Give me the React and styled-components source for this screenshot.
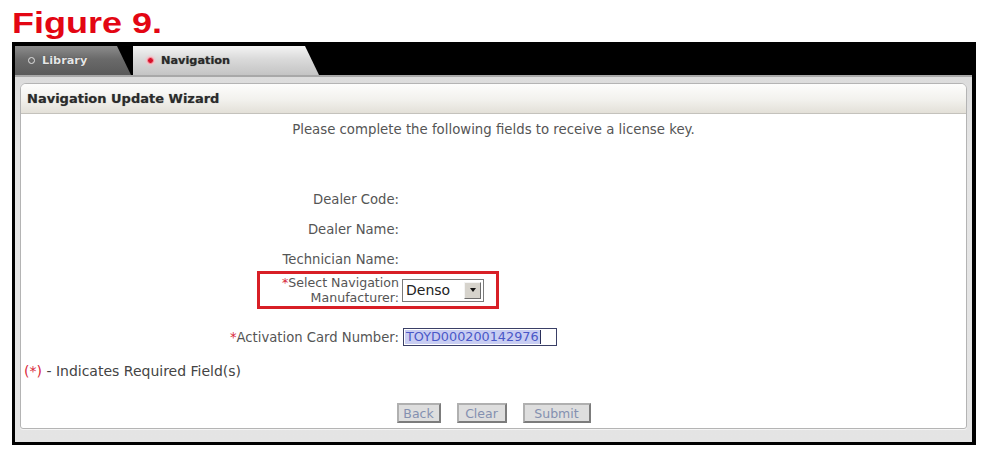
import styled, { createGlobalStyle } from 'styled-components'

const GlobalStyle = createGlobalStyle`
  html, body {
    margin: 0;
    padding: 0;
    background: #fff;
  }
  body {
    font-family: "DejaVu Sans", Verdana, sans-serif;
  }
`

const Page = styled.div`
  width: 983px;
  height: 453px;
  overflow: hidden;
`

const Title = styled.h1`
  margin: 0 0 4px 12px;
  padding-top: 8px;
  height: 30px;
  font-family: "Liberation Sans", Arial, sans-serif;
  font-weight: 700;
  font-size: 30px;
  line-height: 30px;
  color: #e30613;
  transform: scaleX(1.2);
  transform-origin: left center;
`

const Frame = styled.div`
  margin-left: 12px;
  width: 964px;
  box-sizing: border-box;
  border: 3px solid #000;
  border-right-width: 4px;
  background: #d6d6d6;
`

const TabBar = styled.div`
  height: 30px;
  background: #000;
  display: flex;
  align-items: flex-end;
  border-bottom: 2px solid #a8a8a8;
`

const Tab = styled.div`
  height: 29px;
  width: ${p => p.$width}px;
  margin-left: ${p => p.$offset || 0}px;
  box-sizing: border-box;
  display: flex;
  align-items: center;
  gap: 7px;
  padding-left: ${p => p.$pad}px;
  font-size: 11.3px;
  font-weight: 700;
  clip-path: polygon(0 0, calc(100% - 14px) 0, 100% 100%, 0 100%);
  color: ${p => (p.$active ? '#2a2a2a' : '#e6e6e6')};
  background: ${p =>
    p.$active
      ? 'linear-gradient(#f4f4f4, #dadada 45%, #c4c4c4)'
      : 'linear-gradient(#8c8c8c, #6a6a6a 45%, #5a5a5a)'};
  text-shadow: ${p => (p.$active ? '0 0 1px #777' : '0 0 1px #333')};
`

const Radio = styled.span`
  width: 7px;
  height: 7px;
  border-radius: 50%;
  box-sizing: border-box;
  border: 1.5px solid ${p => (p.$on ? '#f3a0a8' : '#e0e0e0')};
  background: ${p => (p.$on ? '#d8102a' : 'transparent')};
  box-shadow: ${p => (p.$on ? '0 0 2px 1px #f6c0c8' : 'none')};
`

const Band = styled.div`
  padding: 6px 5px 13px 5px;
  background: linear-gradient(#dcdcdc, #e6e6e6 20%, #e4e4e4);
`

const Panel = styled.div`
  background: #fff;
  border: 1px solid #b4b4b4;
  border-radius: 6px 6px 3px 3px;
  overflow: hidden;
  box-shadow: 0 1px 0 #f4f4f4;
`

const PanelHeader = styled.div`
  height: 29px;
  display: flex;
  align-items: center;
  padding-left: 6px;
  background: linear-gradient(#fdfdfc, #f2f1ed 55%, #e3e0d8);
  border-bottom: 1px solid #c4c2bc;
  font-size: 13px;
  font-weight: 700;
  color: #2b2b2b;
  text-shadow: 0 0 1px #999;
`

const Content = styled.div`
  padding: 8px 0 5px 0;
  display: flex;
  flex-direction: column;
  color: #555;
`

const Intro = styled.p`
  margin: 0 0 46px;
  text-align: center;
  font-size: 13.3px;
  line-height: 16px;
`

const FieldRow = styled.div`
  height: 30px;
  display: flex;
  align-items: center;
  gap: 4px;
  margin-top: ${p => p.$top || 0}px;
`

const FieldLabel = styled.div`
  width: 378px;
  text-align: right;
  font-size: 13.2px;
`

const Req = styled.span`
  color: #d8283a;
`

const Highlight = styled.div`
  margin: -3px 0 0 236px;
  width: 242px;
  height: 38px;
  box-sizing: border-box;
  border: 3px solid #d81f26;
  display: flex;
  align-items: center;
  gap: 3px;
`

const StackLabel = styled.div`
  width: 139px;
  text-align: right;
  font-size: 12.6px;
  line-height: 15px;
`

const Select = styled.div`
  width: 82px;
  height: 23px;
  box-sizing: border-box;
  border: 1px solid #7a7a7a;
  display: flex;
  align-items: center;
  justify-content: space-between;
  padding: 0 2px 0 3px;
  font-size: 14px;
  color: #222;
  background: #fff;
`

const SelectArrow = styled.span`
  width: 17px;
  height: 17px;
  box-sizing: border-box;
  background: #d6d3cc;
  border: 1px solid;
  border-color: #f4f4f4 #6d6d6d #6d6d6d #f4f4f4;
  display: flex;
  align-items: center;
  justify-content: center;

  &::after {
    content: '';
    border-left: 3.5px solid transparent;
    border-right: 3.5px solid transparent;
    border-top: 4px solid #111;
  }
`

const CardInput = styled.div`
  width: 154px;
  height: 18px;
  box-sizing: border-box;
  border: 1px solid #3a3f66;
  display: flex;
  align-items: stretch;
  padding: 1px;
`

const Selected = styled.span`
  background: #c8cdf2;
  color: #4a58c8;
  font-size: 12.8px;
  line-height: 14px;
  padding: 0 1px;
  border-right: 1px solid #2a2f5a;
`

const Note = styled.p`
  margin: 11px 0 0 3px;
  font-size: 14px;
  line-height: 16px;
  color: #444;
`

const Buttons = styled.div`
  margin-top: 24px;
  display: flex;
  justify-content: center;
  gap: 16px;
`

const Button = styled.button`
  width: ${p => p.$w}px;
  height: 20px;
  padding: 0;
  box-sizing: border-box;
  border: 2px solid;
  border-color: #b0b0b0 #7c7c7c #7c7c7c #b0b0b0;
  background: #dedede;
  font-family: "DejaVu Sans", Verdana, sans-serif;
  font-size: 12.5px;
  color: #8490b0;
`

export default function App() {
  return (
    <Page>
      <GlobalStyle />
      <Title>Figure 9.</Title>
      <Frame>
        <TabBar>
          <Tab $width={116} $pad={13}>
            <Radio />
            Library
          </Tab>
          <Tab $width={186} $offset={2} $pad={14} $active>
            <Radio $on />
            Navigation
          </Tab>
        </TabBar>
        <Band>
          <Panel>
            <PanelHeader>Navigation Update Wizard</PanelHeader>
            <Content>
              <Intro>Please complete the following fields to receive a license key.</Intro>
              <FieldRow>
                <FieldLabel>Dealer Code:</FieldLabel>
              </FieldRow>
              <FieldRow>
                <FieldLabel>Dealer Name:</FieldLabel>
              </FieldRow>
              <FieldRow>
                <FieldLabel>Technician Name:</FieldLabel>
              </FieldRow>
              <Highlight>
                <StackLabel>
                  <Req>*</Req>Select Navigation
                  <br />
                  Manufacturer:
                </StackLabel>
                <Select>
                  Denso
                  <SelectArrow />
                </Select>
              </Highlight>
              <FieldRow $top={13}>
                <FieldLabel>
                  <Req>*</Req>Activation Card Number:
                </FieldLabel>
                <CardInput>
                  <Selected>TOYD000200142976</Selected>
                </CardInput>
              </FieldRow>
              <Note>
                <Req>(*)</Req> - Indicates Required Field(s)
              </Note>
              <Buttons>
                <Button $w={44}>Back</Button>
                <Button $w={50}>Clear</Button>
                <Button $w={68}>Submit</Button>
              </Buttons>
            </Content>
          </Panel>
        </Band>
      </Frame>
    </Page>
  )
}
